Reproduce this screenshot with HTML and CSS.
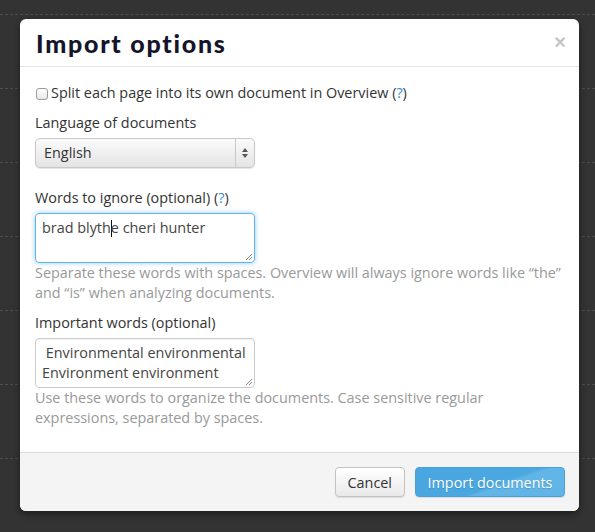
FILE: index.html
```html
<!DOCTYPE html>
<html>
<head>
<meta charset="utf-8">
<link rel="stylesheet" href="styles.css">
</head>
<body>
<div class="backdrop">
  <div class="bg-row"></div><div class="bg-row"></div><div class="bg-row"></div><div class="bg-row"></div>
  <div class="bg-row"></div><div class="bg-row"></div><div class="bg-row"></div><div class="bg-row"></div>
</div>
<div class="modal">
  <div class="modal-header">
    <h3>Import options</h3>
    <span class="close">×</span>
  </div>
  <div class="modal-body">
    <label class="checkbox"><span class="box"></span>Split each page into its own document in Overview&nbsp;<span class="q">(<a>?</a>)</span></label>
    <div class="label">Language of documents</div>
    <div class="select">
      <span class="sel-text">English</span>
      <span class="sel-arrows"><svg width="8" height="12" viewBox="0 0 8 12"><path d="M4 1 L7 5 L1 5 Z" fill="#555"/><path d="M4 11 L7 7 L1 7 Z" fill="#555"/></svg></span>
    </div>
    <div class="label gap">Words to ignore (optional) <span class="q">(<a>?</a>)</span></div>
    <div class="textarea focus">brad blyth<span class="caret"></span>e cheri hunter<svg class="grip" width="9" height="9" viewBox="0 0 9 9"><path d="M8 2 L2 8 M8 5 L5 8" stroke="#888" stroke-width="1"/></svg></div>
    <p class="help">Separate these words with spaces. Overview will always ignore words like “the” and “is” when analyzing documents.</p>
    <div class="label">Important words (optional)</div>
    <div class="textarea"> Environmental environmental
Environment environment<svg class="grip" width="9" height="9" viewBox="0 0 9 9"><path d="M8 2 L2 8 M8 5 L5 8" stroke="#888" stroke-width="1"/></svg></div>
    <p class="help">Use these words to organize the documents. Case sensitive regular expressions, separated by spaces.</p>
  </div>
  <div class="modal-footer">
    <button class="btn">Cancel</button>
    <button class="btn btn-primary">Import documents</button>
  </div>
</div>
</body>
</html>
```

FILE: styles.css
```css
html, body {
  margin: 0;
  padding: 0;
  background: #333333;
  height: 532px;
  overflow: hidden;
  font-family: "Open Sans", "Noto Sans", sans-serif;
  font-size: 14.4px;
  color: #333;
}

.backdrop {
  margin-top: -59px;
}

.bg-row {
  height: 73px;
  border-bottom: 1px dashed #4d4d4d;
}

.modal {
  position: absolute;
  left: 20px;
  top: 19px;
  width: 559px;
  background: #fff;
  border-radius: 6px;
  box-shadow: 0 3px 7px rgba(0, 0, 0, 0.45);
  overflow: hidden;
}

.modal-header {
  display: flex;
  align-items: center;
  justify-content: space-between;
  height: 47px;
  padding: 0 13px 0 16px;
  border-bottom: 1px solid #e5e5e5;
}

.modal-header h3 {
  margin: 0;
  font-family: "Lato", sans-serif;
  font-weight: 900;
  font-size: 25px;
  color: #14142a;
  letter-spacing: 1.75px;
}

.close {
  font-family: "Liberation Sans", sans-serif;
  font-weight: bold;
  font-size: 20px;
  color: #c4c4c4;
  line-height: 20px;
  margin-top: -2px;
}

.modal-body {
  padding: 16px 15px 24px;
  line-height: 20px;
}

.checkbox {
  display: flex;
  align-items: center;
  margin-bottom: 10px;
}

.box {
  width: 10px;
  height: 10px;
  border: 1px solid #9a9a9a;
  border-radius: 3px;
  background: linear-gradient(#fff, #e8e8e8);
  margin: 1px 3px 0 1px;
}

.q a {
  color: #2b8ed6;
}

.label {
  margin-bottom: 5px;
}

.label.gap {
  margin-top: 20px;
}

.select {
  display: flex;
  width: 218px;
  height: 28px;
  border: 1px solid #c8c8c8;
  border-radius: 5px;
  background: linear-gradient(#fbfbfb, #e4e4e4);
  box-shadow: 0 1px 1px rgba(0,0,0,0.1);
}

.sel-text {
  flex: 1;
  padding-left: 8px;
  line-height: 28px;
  color: #333;
}

.sel-arrows {
  width: 18px;
  border-left: 1px solid #c8c8c8;
  display: flex;
  align-items: center;
  justify-content: center;
}

.textarea {
  position: relative;
  box-sizing: border-box;
  width: 220px;
  height: 50px;
  border: 1px solid #cccccc;
  border-radius: 4px;
  padding: 4px 6px;
  white-space: pre-wrap;
  color: #444;
  box-shadow: inset 0 1px 1px rgba(0,0,0,0.06);
}

.textarea.focus {
  border-color: #62b2ee;
  box-shadow: 0 0 5px rgba(82, 168, 236, 0.6);
}

.caret {
  display: inline-block;
  width: 1px;
  height: 17px;
  background: #111;
  vertical-align: -4px;
  margin-right: -1px;
}

.grip {
  position: absolute;
  right: 1px;
  bottom: 1px;
}

.help {
  margin: 0 0 10px;
  color: #999;
}

.modal-body .help:last-child {
  margin-bottom: 0;
}

.modal-footer {
  display: flex;
  justify-content: flex-end;
  gap: 10px;
  padding: 14px 14px 14px;
  background: #f4f4f4;
  border-top: 1px solid #dddddd;
}

.btn {
  height: 30px;
  padding: 0 12px;
  white-space: nowrap;
  font-family: "Open Sans", sans-serif;
  font-size: 14.4px;
  border-radius: 4px;
  border: 1px solid #c3c3c3;
  background: linear-gradient(#ffffff, #e9e9e9);
  color: #333;
  box-shadow: 0 1px 1px rgba(0,0,0,0.1);
}

.btn-primary {
  width: 150px;
  padding: 0;
  border-color: #4a9fd8;
  background: linear-gradient(160deg, #49a6e0 0%, #4aa7e0 55%, #62b5e7 60%, #60b4e6 100%);
  color: #fff;
  text-shadow: 0 1px 1px rgba(0,0,0,0.15);
}
```
